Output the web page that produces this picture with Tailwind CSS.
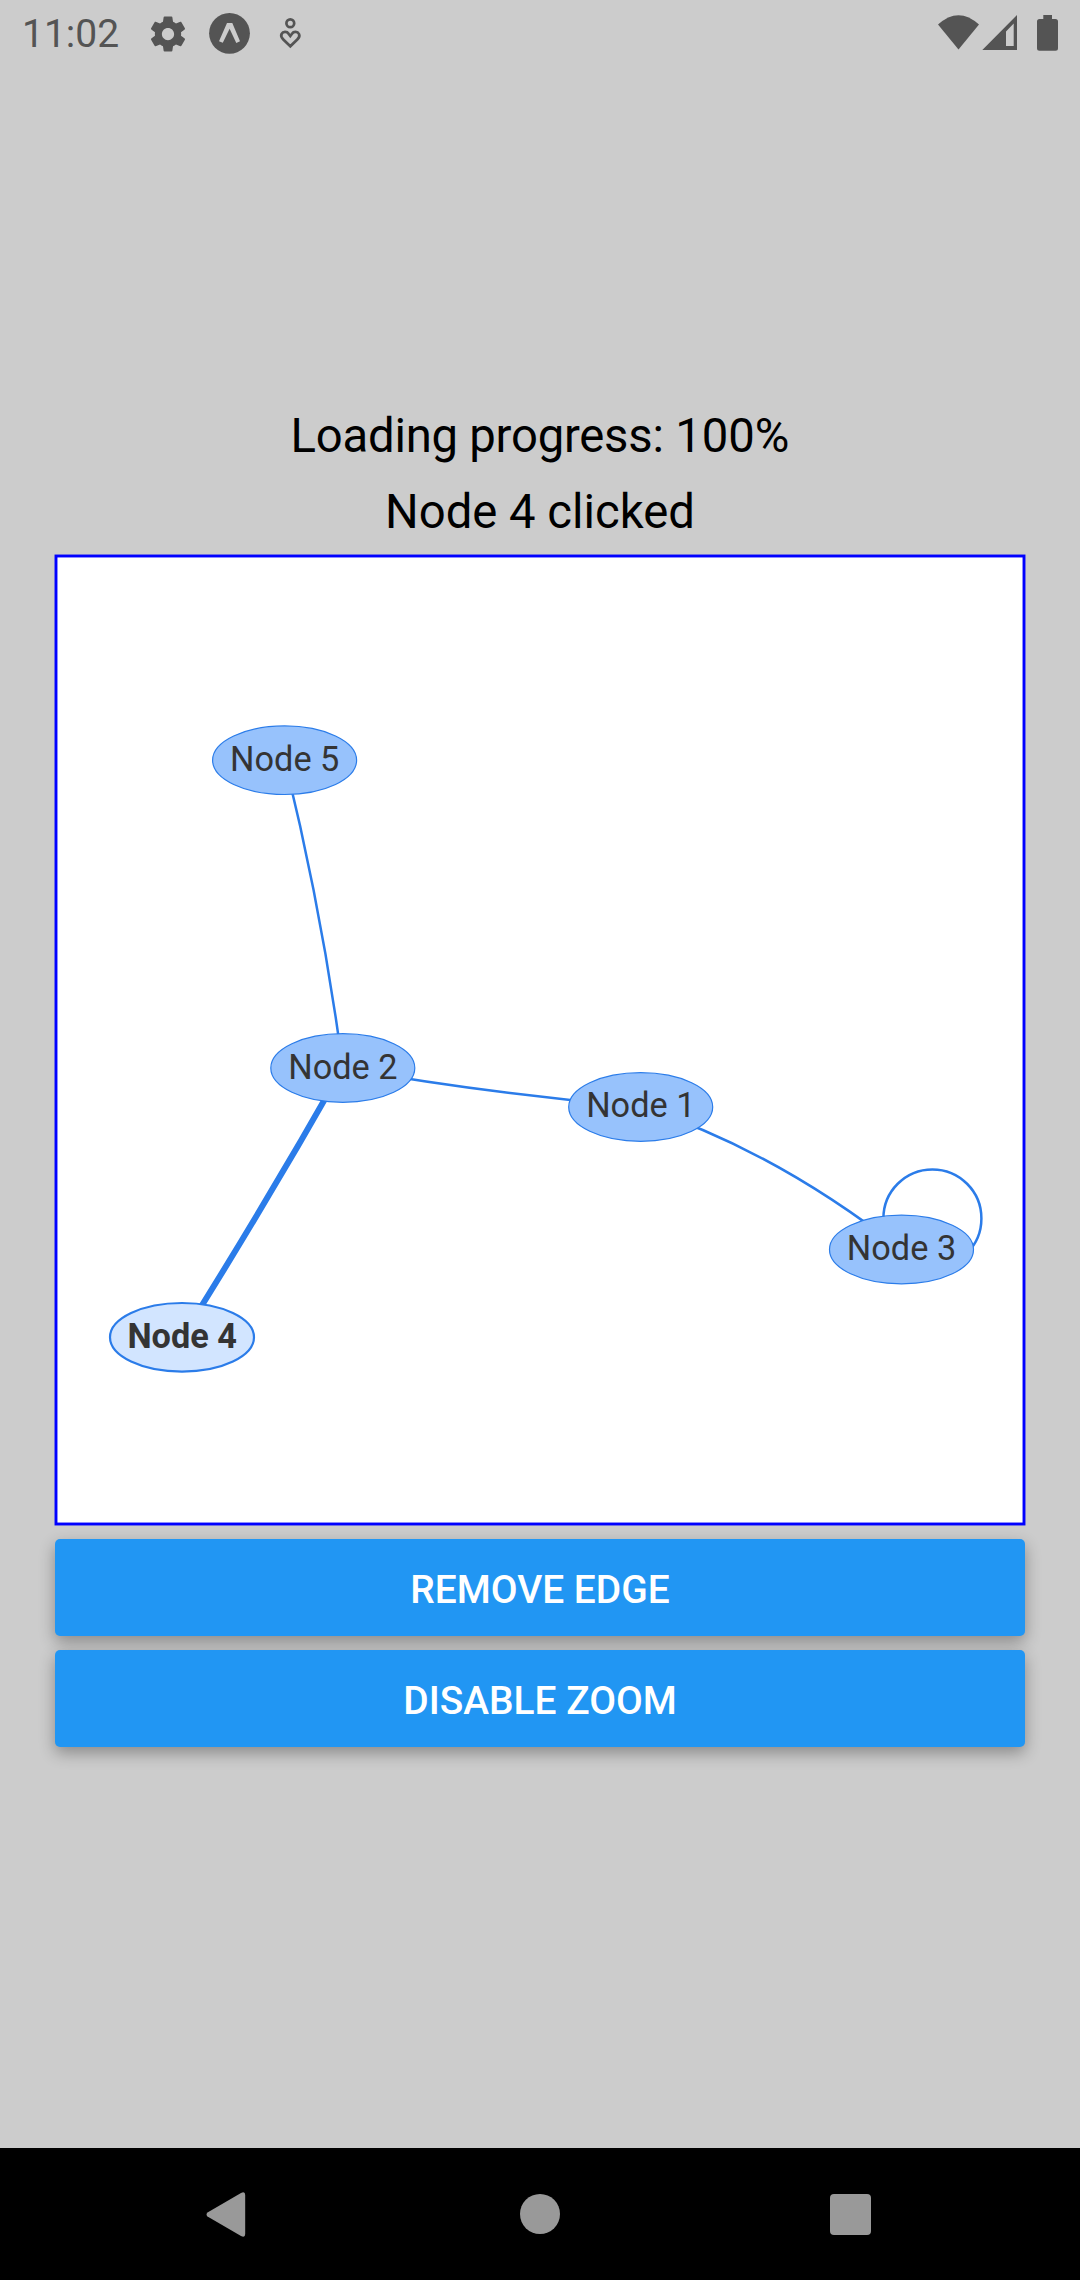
<!DOCTYPE html>
<html lang="en">
<head>
<meta charset="utf-8">
<title>Network</title>
<script src="https://cdn.jsdelivr.net/npm/@tailwindcss/browser@4"></script>
</head>
<body class="flex h-[2280px] w-[1080px] flex-col overflow-hidden bg-[#cccccc] font-['Roboto',sans-serif] text-black">
  <header class="flex h-[66px] items-start justify-between text-[#545454]">
    <div class="flex items-start">
      <span class="w-[147px] pt-[11px] pl-[22px] text-[39px] leading-[46px]">11:02</span>
      <svg class="mt-[12.5px] h-[42px] w-[42px]" viewBox="0 0 24 24" fill="currentColor"><path d="M19.43 12.98c.04-.32.07-.64.07-.98s-.03-.66-.07-.98l2.11-1.65c.19-.15.24-.42.12-.64l-2-3.46c-.12-.22-.39-.3-.61-.22l-2.49 1c-.52-.4-1.08-.73-1.69-.98l-.38-2.65C14.46 2.18 14.25 2 14 2h-4c-.25 0-.46.18-.49.42l-.38 2.65c-.61.25-1.17.59-1.69.98l-2.49-1c-.23-.09-.49 0-.61.22l-2 3.46c-.13.22-.07.49.12.64l2.11 1.65c-.04.32-.07.65-.07.98s.03.66.07.98l-2.11 1.65c-.19.15-.24.42-.12.64l2 3.46c.12.22.39.3.61.22l2.49-1c.52.4 1.08.73 1.69.98l.38 2.65c.03.24.24.42.49.42h4c.25 0 .46-.18.49-.42l.38-2.65c.61-.25 1.17-.59 1.69-.98l2.49 1c.23.09.49 0 .61-.22l2-3.46c.12-.22.07-.49-.12-.64l-2.11-1.65zM12 15.5c-1.930 0-3.500-1.570-3.500-3.500s1.570-3.500 3.500-3.500 3.500 1.570 3.500 3.500-1.570 3.500-3.500 3.500z"/></svg>
      <svg class="mt-3 ml-[19px] h-[42px] w-[42px]" viewBox="208 12 42 42"><circle cx="229.5" cy="33.3" r="20.4" fill="currentColor"/><path d="M227 23h5.300L240 41.300 236.300 43 229.600 28.700 222.800 42.700 219 41.300z" fill="#cccccc"/></svg>
      <svg class="mt-4 ml-7 h-9 w-6" viewBox="278 16 24 36" fill="none" stroke="currentColor" stroke-width="2.700"><circle cx="290.300" cy="23.300" r="3.900"/><path d="M290.300 46.300 283.300 39.500C281.300 37.500 280.800 35.500 281.600 34 283 31.300 287 31.300 288.600 33.800L290.300 36 292 33.800C293.600 31.300 297.600 31.300 299 34 299.800 35.500 299.300 37.500 297.300 39.500z"/></svg>
    </div>
    <svg class="mr-5 h-[66px] w-[124px]" viewBox="936 0 124 66" fill="currentColor">
      <path d="M938 24.500Q958.500 5.800 979 24.500L958.500 49.500z"/>
      <path fill-rule="evenodd" d="M982.300 50 1017 15V50zM1006 31.500V46H1013.700V23.500z"/>
      <path d="M1043.300 15h8.700v4h3.500q2.500 0 2.500 2.500v26.700q0 2.500-2.500 2.500h-16q-2.500 0-2.500-2.500V21.500q0-2.500 2.500-2.500h3.800z"/>
    </svg>
  </header>

  <main class="flex flex-1 flex-col items-center">
    <p class="mt-[342px] text-[47.250px] leading-[56px]"><span class="tracking-[-0.23px]">Loading progress: </span>100%</p>
    <p class="mt-5 text-[47.250px] leading-[56px]">Node 4 clicked</p>
    <svg class="mt-[14px] h-[972px] w-[972px]" viewBox="54 554 972 972">
      <rect x="56" y="556" width="968" height="968" fill="#fff" stroke="#0000ff" stroke-width="2.900"/>
      <g fill="none" stroke="#2b7ce9" stroke-width="2.500">
        <path d="M284.700 760.200Q322.700 914 342.800 1068"/>
        <path d="M342.800 1068Q491.800 1094 640.800 1107"/>
        <path d="M640.800 1107Q773 1149 901.500 1249.700"/>
        <path stroke-width="6" d="M342.800 1068Q266.500 1202.700 182 1337.300"/>
        <circle cx="932.400" cy="1218.400" r="49"/>
      </g>
      <g fill="#97c2fc" stroke="#2b7ce9" stroke-width="1.200">
        <ellipse cx="284.600" cy="760.200" rx="72" ry="34.300"/>
        <ellipse cx="342.800" cy="1068" rx="72" ry="34.300"/>
        <ellipse cx="640.700" cy="1107" rx="72" ry="34.300"/>
        <ellipse cx="901.500" cy="1249.500" rx="72" ry="34.300"/>
        <ellipse cx="182" cy="1337.300" rx="72" ry="34.300" fill="#d2e5ff" stroke-width="2.200"/>
      </g>
      <g class="text-[34.300px]" fill="#343434" text-anchor="middle">
        <text x="284.700" y="770.700">Node 5</text>
        <text x="342.900" y="1078.500">Node 2</text>
        <text x="640.800" y="1117.300">Node 1</text>
        <text x="901.500" y="1260">Node 3</text>
        <text class="font-bold" x="182.200" y="1348">Node 4</text>
      </g>
    </svg>
    <div class="mt-[13px] flex w-[970px] flex-col gap-[14px]">
      <button class="h-[97px] rounded-[5px] bg-[#2196f3] pt-1.5 text-[38.900px] font-medium text-white shadow-[0_6px_16px_rgba(0,0,0,0.32)]">REMOVE EDGE</button>
      <button class="h-[97px] rounded-[5px] bg-[#2196f3] pt-1.5 text-[38.900px] font-medium text-white shadow-[0_6px_16px_rgba(0,0,0,0.32)]">DISABLE ZOOM</button>
    </div>
  </main>

  <nav class="h-[132px] bg-black">
    <svg class="h-[132px] w-[1080px]" viewBox="0 2148 1080 132" fill="#999999">
      <path d="M207.500 2212.500 241 2193Q245.200 2191 245.200 2195V2234Q245.200 2238 241 2236L207.500 2216.500Q205.500 2214.500 207.500 2212.500z"/>
      <circle cx="540" cy="2214" r="20"/>
      <rect x="830" y="2194" width="41" height="41" rx="4"/>
    </svg>
  </nav>
</body>
</html>
